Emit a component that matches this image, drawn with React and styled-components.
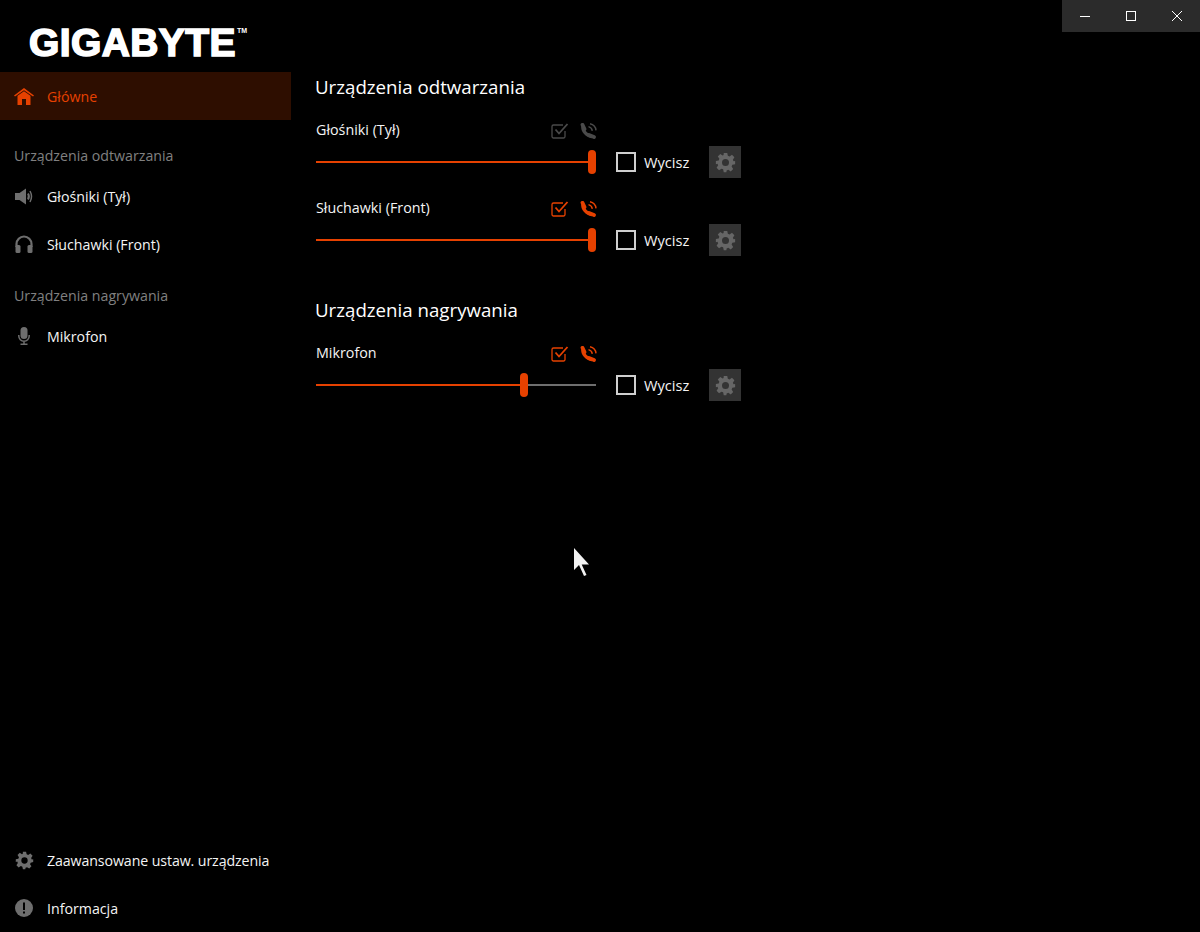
import React from 'react'
import styled, { createGlobalStyle } from 'styled-components'

const orange = '#e64100'
const iconGray = '#6e6e6e'

const GlobalStyle = createGlobalStyle`
  html, body {
    margin: 0;
    height: 100%;
    background: #000;
    overflow: hidden;
  }
  body {
    font-family: "Open Sans", "Liberation Sans", sans-serif;
    color: #fff;
  }
`

const Page = styled.div`
  position: relative;
  display: flex;
  width: 1200px;
  height: 932px;
  background: #000;
  overflow: hidden;
`

const WindowButtons = styled.div`
  position: absolute;
  top: 0;
  right: 0;
  display: flex;
  height: 32px;
  background: #2b2b2b;
`

const WindowButton = styled.div`
  display: flex;
  align-items: center;
  justify-content: center;
  width: 46px;
  height: 32px;
`

const Cursor = styled.svg`
  position: absolute;
  left: 573px;
  top: 547px;
`

const Sidebar = styled.aside`
  display: flex;
  flex-direction: column;
  flex: none;
  width: 291px;
`

const Brand = styled.div`
  display: flex;
  align-items: flex-start;
  height: 72px;
  padding-left: 29px;
  box-sizing: border-box;
  color: #fff;
`

const BrandName = styled.span`
  margin-top: 21px;
  font-family: "Liberation Sans", Arial, sans-serif;
  font-size: 39px;
  line-height: 44px;
  font-weight: 700;
  letter-spacing: 0.4px;
  -webkit-text-stroke: 1.6px #fff;
`

const BrandMark = styled.span`
  margin-top: 27px;
  margin-left: 1px;
  font-family: "Liberation Sans", Arial, sans-serif;
  font-size: 7px;
  line-height: 8px;
  font-weight: 700;
`

const NavItem = styled.div`
  display: flex;
  align-items: center;
  height: 48px;
  background: ${p => (p.$active ? '#2e0e00' : 'transparent')};
  color: ${p => (p.$active ? orange : '#f4f4f4')};
  font-size: 14.2px;
  letter-spacing: ${p => (p.$tight ? '-0.1px' : '0')};
`

const NavIcon = styled.span`
  display: flex;
  align-items: center;
  justify-content: center;
  flex: none;
  width: 46px;
  padding-left: 1px;
  color: ${p => (p.$active ? orange : iconGray)};
`

const NavLabel = styled.div`
  display: flex;
  align-items: flex-end;
  height: ${p => p.$height}px;
  padding: 0 0 7px 14px;
  box-sizing: border-box;
  color: #808080;
  font-size: 14.2px;
`

const NavSpacer = styled.div`
  flex: 1;
`

const Main = styled.main`
  flex: 1;
  padding: 72px 0 0 24px;
`

const Section = styled.section`
  width: 426px;
  & + & {
    margin-top: 39px;
  }
`

const Heading = styled.h2`
  margin: 0 0 16px;
  height: 30px;
  font-size: 18.7px;
  line-height: 30px;
  font-weight: 400;
  color: #fff;
`

const Device = styled.div`
  padding-left: 1px;
  & + & {
    margin-top: 18px;
  }
`

const DeviceHead = styled.div`
  display: flex;
  align-items: center;
  justify-content: space-between;
  width: 282px;
  height: 24px;
  margin-bottom: 4px;
`

const DeviceName = styled.span`
  margin-top: -2px;
  font-size: 14.3px;
  color: #f4f4f4;
`

const DeviceIcons = styled.div`
  display: flex;
  align-items: center;
  gap: 11px;
  margin-top: 2px;
  color: ${p => (p.$on ? orange : '#4a4a4a')};
`

const DeviceRow = styled.div`
  display: flex;
  align-items: center;
  height: 32px;
`

const Slider = styled.div`
  position: relative;
  flex: none;
  width: 280px;
  height: 2px;
  background: #6e6e6e;
`

const SliderFill = styled.div`
  height: 100%;
  background: ${orange};
`

const SliderThumb = styled.div`
  position: absolute;
  top: -11px;
  width: 8px;
  height: 24px;
  margin-left: -4px;
  border-radius: 4px;
  background: ${orange};
`

const Mute = styled.label`
  display: flex;
  align-items: center;
  gap: 8px;
  width: 93px;
  margin-left: 20px;
  font-size: 14.6px;
  color: #f4f4f4;
`

const Box = styled.span`
  flex: none;
  width: 20px;
  height: 20px;
  box-sizing: border-box;
  border: 2px solid #cfcfcf;
`

const GearButton = styled.div`
  display: flex;
  align-items: center;
  justify-content: center;
  flex: none;
  width: 32px;
  height: 32px;
  background: #333;
  color: #666;
`

const Gear = ({ size = 19 }) => (
  <svg width={size} height={size} viewBox="0 0 24 24" fill="currentColor">
    <path
      fillRule="evenodd"
      d="M10 1h4l.7 3.2 1.9.8 2.8-1.8 2.8 2.8-1.8 2.8.8 1.900L23 10.400v3.600l-3.200.7-.8 1.900 1.800 2.800-2.800 2.800-2.800-1.800-1.900.8L13 23h-3l-.7-3.200-1.900-.8-2.800 1.800-2.800-2.800 1.800-2.800-.8-1.900L1 14v-3.600l3.200-.7.8-1.900L3.200 5 6 2.200 8.800 4l1-.5zM12 8a4 4 0 1 0 0 8 4 4 0 0 0 0-8z"
    />
  </svg>
)

const HomeIcon = () => (
  <svg width="20" height="17" viewBox="0 0 20 17" fill="currentColor">
    <path d="M10 0 20 7.400 19 8.600 10 2.200 1 8.600 0 7.400z" />
    <path d="M3.500 7.800 10 3.200l6.500 4.600V17H12v-6H8v6H3.500z" />
  </svg>
)

const SpeakerIcon = () => (
  <svg width="18" height="17" viewBox="0 0 18 17" fill="currentColor">
    <path d="M0 5h4.500L11 .5v16L4.500 12H0z" />
    <path d="M13 5.500q1.800 3 0 6" fill="none" stroke="currentColor" strokeWidth="2" />
    <path d="M15 3q3 5.500 0 11" fill="none" stroke="currentColor" strokeWidth="1.500" />
  </svg>
)

const HeadphonesIcon = () => (
  <svg width="18" height="18" viewBox="0 0 18 18" fill="currentColor">
    <path d="M1.500 12V9a7.500 7.500 0 0 1 15 0v3" fill="none" stroke="currentColor" strokeWidth="2.200" />
    <rect x="0.500" y="10" width="5" height="8" rx="1.500" />
    <rect x="12.500" y="10" width="5" height="8" rx="1.500" />
  </svg>
)

const MicIcon = () => (
  <svg width="12" height="18" viewBox="0 0 12 18" fill="currentColor">
    <rect x="2.500" y="0" width="7" height="12" rx="3.500" />
    <path d="M.8 8v1a5.200 5.200 0 0 0 10.400 0V8M6 14.500V17M2.500 17.200h7" fill="none" stroke="currentColor" strokeWidth="1.500" />
  </svg>
)

const InfoIcon = () => (
  <svg width="18" height="18" viewBox="0 0 18 18">
    <circle cx="9" cy="9" r="9" fill="currentColor" />
    <rect x="8" y="3.500" width="2" height="7.500" fill="#000" />
    <rect x="8" y="12.500" width="2" height="2" fill="#000" />
  </svg>
)

const CheckIcon = () => (
  <svg width="18" height="16" viewBox="0 0 18 16" fill="none" stroke="currentColor">
    <path d="M14 8v5.500a1.500 1.500 0 0 1-1.500 1.500h-10A1.500 1.500 0 0 1 1 13.500v-10A1.500 1.500 0 0 1 2.500 2H12" strokeWidth="1.300" />
    <path d="M4.500 6.500 8 10.500 16.500 1" strokeWidth="1.800" />
  </svg>
)

const PhoneIcon = () => (
  <svg width="18" height="16" viewBox="0 0 18 16" fill="none" stroke="currentColor">
    <path d="M3 3c-.8 4.500 3.500 10 9 10.500" strokeWidth="3.400" />
    <path d="M2.500 1.800 4.500 6M9 12l5 2" strokeWidth="3.800" strokeLinecap="round" />
    <path d="M8.500 3.600a5 5 0 0 1 3.800 4.300" strokeWidth="1.400" />
    <path d="M10 .8a7.500 7.500 0 0 1 6 6.600" strokeWidth="1.400" />
  </svg>
)

const DeviceControl = ({ name, value, on }) => (
  <Device>
    <DeviceHead>
      <DeviceName>{name}</DeviceName>
      <DeviceIcons $on={on}>
        <CheckIcon />
        <PhoneIcon />
      </DeviceIcons>
    </DeviceHead>
    <DeviceRow>
      <Slider>
        <SliderFill style={{ width: `${value}%` }} />
        <SliderThumb style={{ left: `${value}%` }} />
      </Slider>
      <Mute>
        <Box />
        Wycisz
      </Mute>
      <GearButton>
        <Gear size={21} />
      </GearButton>
    </DeviceRow>
  </Device>
)

export default function App() {
  return (
    <Page>
      <GlobalStyle />
      <Sidebar>
        <Brand>
          <BrandName>GIGABYTE</BrandName>
          <BrandMark>TM</BrandMark>
        </Brand>
        <NavItem $active>
          <NavIcon $active>
            <HomeIcon />
          </NavIcon>
          Główne
        </NavItem>
        <NavLabel $height={52}>Urządzenia odtwarzania</NavLabel>
        <NavItem>
          <NavIcon>
            <SpeakerIcon />
          </NavIcon>
          Głośniki (Tył)
        </NavItem>
        <NavItem>
          <NavIcon>
            <HeadphonesIcon />
          </NavIcon>
          Słuchawki (Front)
        </NavItem>
        <NavLabel $height={44}>Urządzenia nagrywania</NavLabel>
        <NavItem>
          <NavIcon>
            <MicIcon />
          </NavIcon>
          Mikrofon
        </NavItem>
        <NavSpacer />
        <NavItem $tight>
          <NavIcon>
            <Gear />
          </NavIcon>
          Zaawansowane ustaw. urządzenia
        </NavItem>
        <NavItem>
          <NavIcon>
            <InfoIcon />
          </NavIcon>
          Informacja
        </NavItem>
      </Sidebar>
      <Main>
        <Section>
          <Heading>Urządzenia odtwarzania</Heading>
          <DeviceControl name="Głośniki (Tył)" value={98.6} />
          <DeviceControl name="Słuchawki (Front)" value={98.6} on />
        </Section>
        <Section>
          <Heading>Urządzenia nagrywania</Heading>
          <DeviceControl name="Mikrofon" value={74.3} on />
        </Section>
      </Main>
      <WindowButtons>
        <WindowButton>
          <svg width="10" height="10" viewBox="0 0 10 10" stroke="#fff" fill="none">
            <path d="M0 5.500h10" />
          </svg>
        </WindowButton>
        <WindowButton>
          <svg width="10" height="10" viewBox="0 0 10 10" stroke="#fff" fill="none">
            <rect x="0.500" y="0.500" width="9" height="9" />
          </svg>
        </WindowButton>
        <WindowButton>
          <svg width="10" height="10" viewBox="0 0 10 10" stroke="#fff" fill="none">
            <path d="M0 0l10 10M10 0 0 10" />
          </svg>
        </WindowButton>
      </WindowButtons>
      <Cursor width="18" height="30" viewBox="0 0 18 30" fill="#f2f2f2">
        <path d="M1 1v22l5-5 5 11 2.500-1-4.800-10.500H16z" />
      </Cursor>
    </Page>
  )
}
